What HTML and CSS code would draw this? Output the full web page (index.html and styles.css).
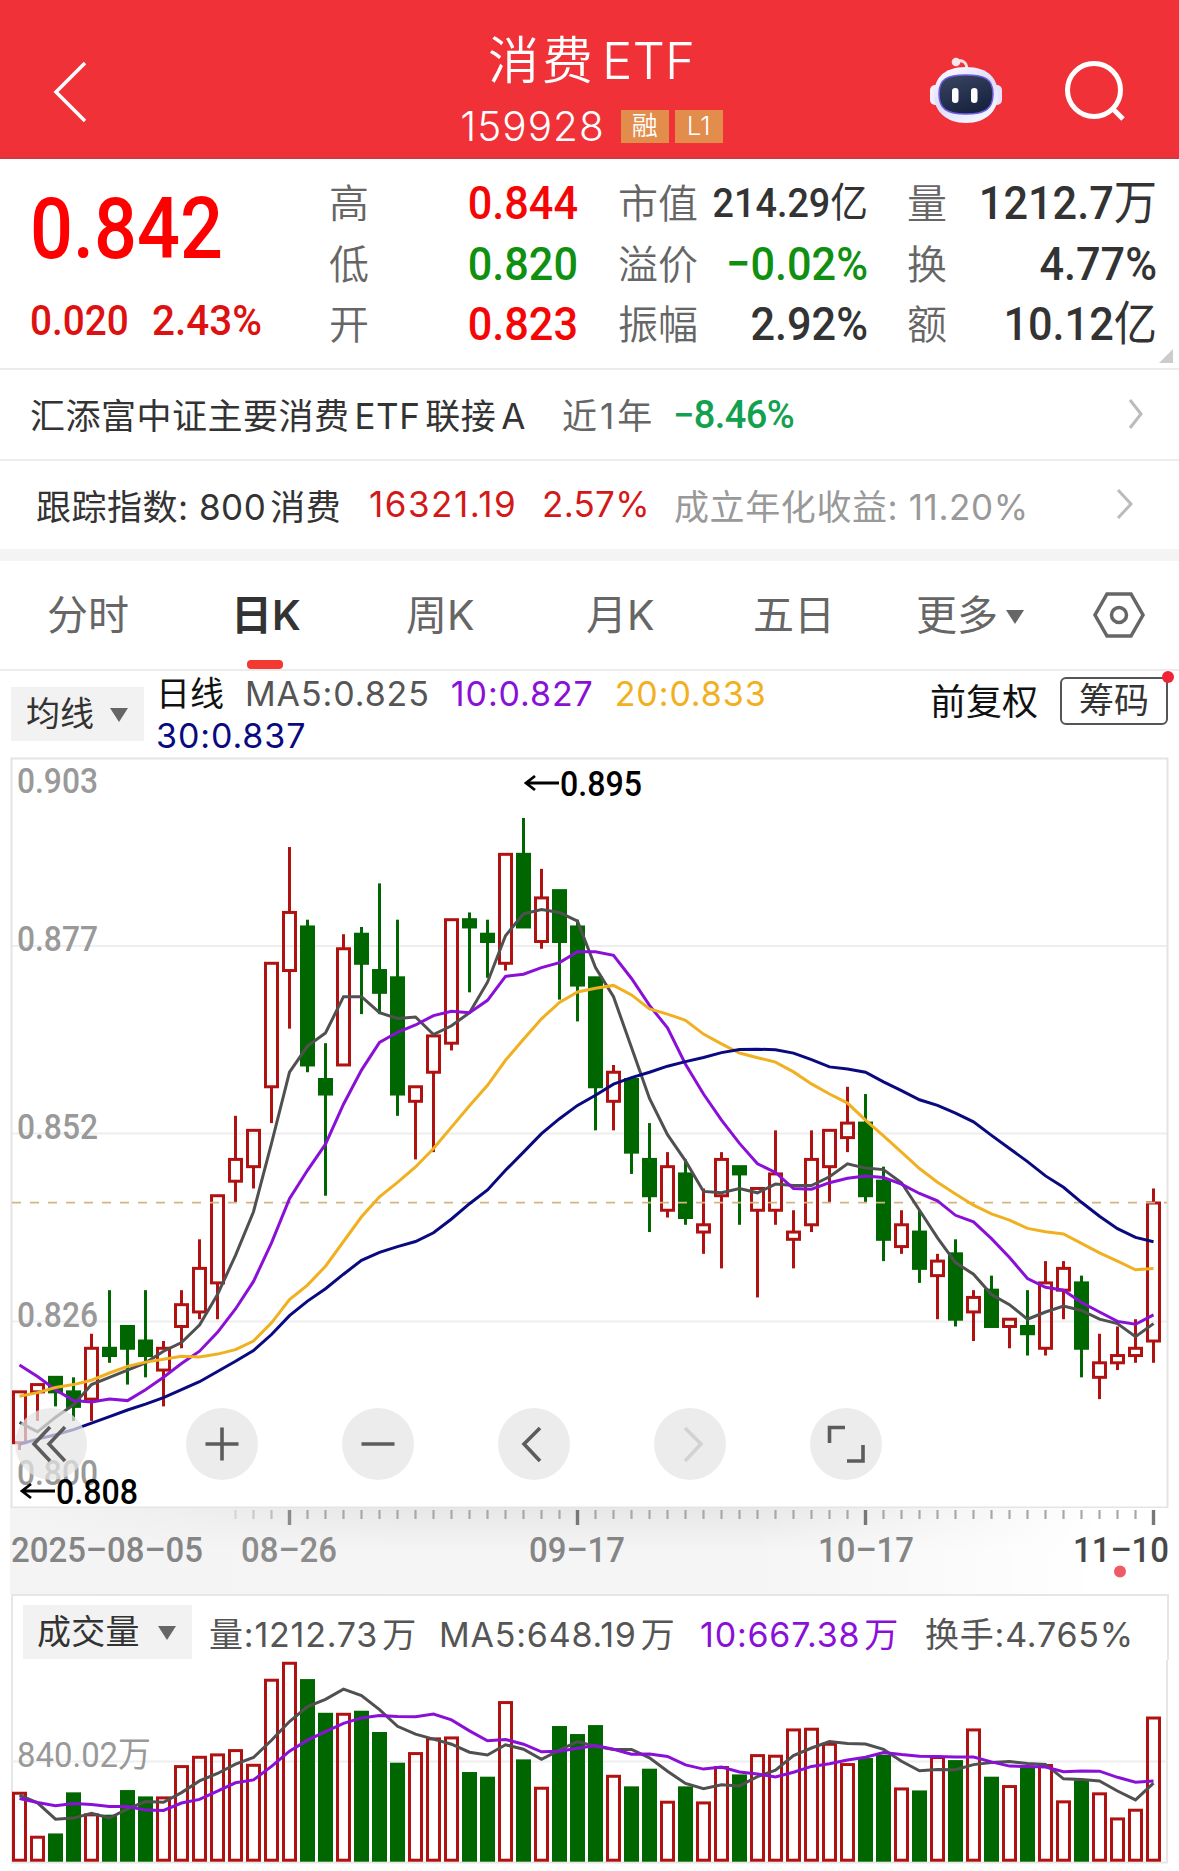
FILE: index.html
```html
<!DOCTYPE html>
<html lang="zh-CN">
<head>
    <meta charset="UTF-8">
    <title>消费ETF</title>
    <link rel="stylesheet" href="styles.css">
</head>
<body>
<header class="header">
    <svg class="back" width="40" height="66" viewBox="0 0 40 66"><path d="M35 4 6 33l29 29"/></svg>
    <div class="title">
        <h1>消费<span>ETF</span></h1>
        <p><span class="code">159928</span><i>融</i><i>L1</i></p>
    </div>
    <div class="tools">
        <svg width="76" height="72" viewBox="0 0 76 72">
            <defs>
                <linearGradient id="head" x1="0" y1="0" x2="0.6" y2="1">
                    <stop offset="0" stop-color="#ffffff"/>
                    <stop offset="0.55" stop-color="#dedcfb"/>
                    <stop offset="1" stop-color="#f1f6ff"/>
                </linearGradient>
                <linearGradient id="face" x1="0" y1="0" x2="0.5" y2="1">
                    <stop offset="0" stop-color="#3b4663"/>
                    <stop offset="1" stop-color="#18233f"/>
                </linearGradient>
            </defs>
            <path d="M28 6c6-3 11 0 11 8" fill="none" stroke="#f7dfe6" stroke-width="3"/>
            <circle cx="28" cy="6" r="4.3" fill="#f9e6ea"/>
            <rect x="2" y="29" width="12" height="20" rx="5" fill="#f4eefb"/>
            <rect x="62" y="29" width="12" height="20" rx="5" fill="#e6e2fb"/>
            <path d="M38 11c23 0 32 12 32 28S58 67 38 67 6 55 6 39s9-28 32-28z" fill="url(#head)"/>
            <path d="M38 19c19 0 27 4 27 19s-8 20-27 20-27-5-27-20 8-19 27-19z" fill="url(#face)" stroke="#6d5ce0" stroke-width="1.5"/>
            <rect x="24" y="32" width="6.5" height="15" rx="3.2" fill="#fff"/>
            <rect x="43" y="32" width="6.5" height="15" rx="3.2" fill="#fff"/>
        </svg>
        <svg class="search" width="64" height="64" viewBox="0 0 64 64"><circle cx="30" cy="30" r="26.5"/><path d="m49 49 10 10"/></svg>
    </div>
</header>

<section class="quote">
    <div class="now">
        <strong>0.842</strong>
        <p><span>0.020</span><span>2.43%</span></p>
    </div>
    <dl class="stats">
        <dt>高</dt><dd class="up">0.844</dd><dt>市值</dt><dd class="small">214.29<b>亿</b></dd><dt>量</dt><dd>1212.7<b>万</b></dd>
        <dt>低</dt><dd class="down">0.820</dd><dt>溢价</dt><dd class="down">−0.02%</dd><dt>换</dt><dd>4.77%</dd>
        <dt>开</dt><dd class="up">0.823</dd><dt>振幅</dt><dd>2.92%</dd><dt>额</dt><dd>10.12<b>亿</b></dd>
    </dl>
    <span class="corner"></span>
</section>

<a class="row fund">
    <span class="name">汇添富中证主要消费<em>ETF</em>联接<em>A</em></span>
    <span class="year">近1年</span>
    <span class="rate">−8.46%</span>
    <svg width="18" height="34" viewBox="0 0 18 34"><path d="m3 3 11 14L3 31"/></svg>
</a>
<a class="row index">
    <span class="name">跟踪指数: 800<em>消费</em></span>
    <span class="point">16321.19</span>
    <span class="pct">2.57%</span>
    <span class="profit">成立年化收益: 11.20%</span>
    <svg width="20" height="34" viewBox="0 0 20 34"><path d="m3 3 13 14L3 31"/></svg>
</a>

<nav class="tabs">
    <a>分时</a>
    <a class="current">日K</a>
    <a>周K</a>
    <a>月K</a>
    <a>五日</a>
    <a>更多<i class="arrow"></i></a>
    <svg width="54" height="48" viewBox="0 0 54 48"><path d="M15 3h24l12 21-12 21H15L3 24z"/><circle cx="27" cy="24" r="7.5"/></svg>
</nav>

<div class="legend">
    <span class="select">均线<i class="arrow"></i></span>
    <div class="ma">
        <p><span class="black">日线</span><span class="ma5">MA5:0.825</span><span class="ma10">10:0.827</span><span class="ma20">20:0.833</span></p>
        <p><span class="ma30">30:0.837</span></p>
    </div>
    <span class="fq">前复权</span>
    <span class="chip">筹码</span>
</div>

<div class="chart">
    <svg id="kline" width="1179" height="751" viewBox="0 757 1179 751"></svg>
    <div class="controls">
        <button><svg viewBox="0 0 72 72"><path d="M35 19 19 36l16 17M50 19 34 36l16 17"/></svg></button>
        <button><svg viewBox="0 0 72 72"><path d="M19.500 36h33M36 19.500v33"/></svg></button>
        <button><svg viewBox="0 0 72 72"><path d="M19.500 36h33"/></svg></button>
        <button><svg viewBox="0 0 72 72"><path d="M42 20 26 36l16 17"/></svg></button>
        <button class="off"><svg viewBox="0 0 72 72"><path d="m31 20 16 16-16 17"/></svg></button>
        <button><svg viewBox="0 0 72 72"><path d="M19.500 35V19.500H35M53 37v16H37"/></svg></button>
    </div>
</div>
<div class="axis">
    <svg id="axis" width="1179" height="86" viewBox="0 1508 1179 86"></svg>
</div>

<div class="volume">
    <div class="volbar">
        <span class="select">成交量<i class="arrow"></i></span>
        <span class="v1">量:1212.73<em>万</em></span>
        <span class="v2">MA5:648.19<em>万</em></span>
        <span class="v3 ma10">10:667.38<em>万</em></span>
        <span class="v4">换手:4.765%</span>
    </div>
    <svg id="vol" width="1179" height="204" viewBox="0 1660 1179 204"></svg>
</div>
<script src="chart.js"></script>
</body>
</html>
```

FILE: styles.css
```css
* {
    padding: 0;
    margin: 0;
    box-sizing: border-box;
}
body {
    width: 1179px;
    height: 1871px;
    overflow: hidden;
    background-color: #ffffff;
    font-family: Inter, "Noto Sans CJK SC", sans-serif;
    color: #333333;
}
svg {
    display: block;
    flex: none;
}
em, i {
    font-style: normal;
}
span, a {
    white-space: nowrap;
}
.header {
    height: 159px;
    display: grid;
    grid-template-columns: 240px 1fr 240px;
    padding: 0 50px;
    background-color: #f03138;
    border-bottom: 2px solid #cf3a40;
    color: #ffffff;
}
.back {
    margin-top: 59px;
}
.back path, .search {
    fill: none;
    stroke: #ffffff;
    stroke-width: 3.5;
}
.search {
    stroke-width: 5;
}
.title {
    text-align: center;
}
.title h1 {
    height: 66px;
    margin-top: 28px;
    padding-left: 4px;
    line-height: 66px;
    font-size: 51px;
    font-weight: 350;
    letter-spacing: 3px;
}
.title h1 span {
    margin-left: 6px;
    letter-spacing: 0;
}
.title p {
    display: flex;
    justify-content: center;
    align-items: center;
    gap: 6px;
    height: 64px;
    padding-left: 4px;
}
.title .code {
    margin-right: 10px;
    font-size: 40.5px;
    font-weight: 350;
    letter-spacing: 1px;
}
.title i {
    width: 48px;
    height: 33px;
    line-height: 32px;
    font-size: 26px;
    font-weight: 350;
    background-color: #e28d4b;
}
.tools {
    display: flex;
    justify-content: flex-end;
    gap: 60px;
    padding-top: 56px;
}
.tools .search {
    margin: 4px 1px 0 0;
}

.quote {
    position: relative;
    display: flex;
    height: 211px;
    border-bottom: 2px solid #ececec;
    font-family: Roboto, "Noto Sans CJK SC", sans-serif;
    font-weight: 500;
}
.now {
    width: 329px;
    padding-left: 30px;
    color: #dd1111;
}
.now strong {
    display: block;
    height: 104px;
    margin-top: 18px;
    line-height: 104px;
    font-size: 85px;
    font-weight: 500;
    color: #ff0000;
    transform: scaleX(0.89);
    transform-origin: left;
}
.now p {
    display: flex;
    height: 78px;
    line-height: 78px;
    font-size: 43px;
}
.now p span {
    width: 122px;
    transform: scaleX(0.9);
    transform-origin: left;
}
.now p span:last-child {
    transform: scaleX(0.94);
}
.stats {
    display: grid;
    grid-template-columns: 60px 189px 100px 190px 90px 199px;
    grid-template-rows: repeat(3, 60.5px);
    padding-top: 14px;
    line-height: 60px;
}
.stats dt {
    padding-top: 2px;
    white-space: nowrap;
    font-size: 40px;
    font-weight: 350;
    color: #666666;
}
.stats dt:nth-of-type(3n + 2) {
    margin-left: 40px;
}
.stats dt:nth-of-type(3n) {
    margin-left: 39px;
}
.stats dd {
    text-align: right;
    white-space: nowrap;
    font-size: 47px;
    transform: scaleX(0.92);
    transform-origin: right;
}
.stats .small {
    font-size: 41px;
}
.stats b {
    font-weight: 400;
}
.up {
    color: #f50505;
}
.down {
    color: #109010;
}
.corner {
    position: absolute;
    right: 6px;
    bottom: 5px;
    border-left: 14px solid transparent;
    border-bottom: 14px solid #cccccc;
}

.row {
    display: flex;
    align-items: center;
    height: 91px;
    padding-bottom: 2px;
    border-bottom: 2px solid #ececec;
    font-size: 35px;
}
.row svg {
    margin-left: auto;
    fill: none;
    stroke: #bbbbbb;
    stroke-width: 3;
}
.fund {
    padding-left: 30px;
    padding-right: 34px;
}
.fund .name {
    width: 532px;
    letter-spacing: 0.5px;
}
.fund .name em {
    margin: 0 5px;
}
.fund .year {
    width: 111px;
    letter-spacing: 3px;
    color: #666666;
}
.fund .rate {
    padding-top: 2px;
    font-family: Roboto, sans-serif;
    font-size: 38px;
    font-weight: 500;
    letter-spacing: -0.6px;
    color: #12a14f;
}
.index {
    height: 88px;
    padding-left: 36px;
    padding-right: 44px;
    border: none;
}
.index .name {
    width: 333px;
    letter-spacing: 0.5px;
}
.index .name em {
    margin-left: 4px;
}
.index .point {
    width: 173px;
    letter-spacing: 1.5px;
    color: #d31818;
}
.index .pct {
    width: 132px;
    letter-spacing: 0.3px;
    color: #d31818;
}
.index .profit {
    letter-spacing: 0.6px;
    color: #999999;
}

.tabs {
    display: grid;
    grid-template-columns: 184px 175px 180px 167px 163px 176px 54px;
    align-items: center;
    height: 122px;
    padding-left: 47px;
    border-top: 12px solid #f4f4f4;
    border-bottom: 2px solid #ececec;
    font-size: 41px;
    line-height: 108px;
    color: #666666;
}
.tabs .current {
    position: relative;
    font-weight: 600;
    color: #333333;
}
.tabs .current::after {
    content: "";
    position: absolute;
    left: 16px;
    bottom: 0;
    width: 36px;
    height: 9px;
    border-radius: 4px;
    background-color: #f23a30;
}
.tabs svg {
    fill: none;
    stroke: #666666;
    stroke-width: 3.5;
}
.arrow {
    display: inline-block;
    vertical-align: middle;
    border: 9.5px solid transparent;
    border-top: 14px solid #666666;
    border-bottom: none;
}
.tabs .arrow {
    margin: -4px 0 0 8px;
}

.legend {
    display: flex;
    height: 86px;
    padding-left: 11px;
    font-size: 34px;
}
.select {
    display: block;
    height: 54px;
    line-height: 54px;
    background-color: #f2f2f2;
}
.legend .select {
    width: 133px;
    margin: 16px 12px 0 0;
    padding-left: 15px;
}
.legend .arrow {
    margin: -4px 0 0 16px;
}
.ma {
    width: 774px;
    height: 86px;
    overflow: hidden;
}
.ma p {
    display: flex;
    gap: 21px;
    height: 42px;
    line-height: 46px;
    letter-spacing: 0.9px;
}
.ma .black {
    letter-spacing: 0;
}
.black, .fq {
    color: #111111;
}
.ma5 {
    color: #555555;
}
.ma10 {
    color: #8a10d8;
}
.ma20 {
    color: #f0b020;
}
.ma30 {
    color: #0a0a80;
}
.fq {
    width: 130px;
    line-height: 62px;
    font-size: 36px;
}
.chip {
    position: relative;
    width: 108px;
    height: 48px;
    margin-top: 6px;
    border: 2px solid #555555;
    border-radius: 6px;
    line-height: 43px;
    text-align: center;
    font-size: 35px;
}
.chip::after {
    content: "";
    position: absolute;
    right: -8px;
    top: -8px;
    width: 12px;
    height: 12px;
    border-radius: 50%;
    background-color: #f22334;
}

.chart {
    position: relative;
}
.chart svg text, .axis text, .volume text {
    font-family: Roboto, "Noto Sans CJK SC", sans-serif;
    font-size: 35px;
    font-weight: 500;
}
.controls {
    position: absolute;
    left: 15px;
    right: 0;
    bottom: 28px;
    display: flex;
    gap: 84px;
}
.controls button {
    width: 72px;
    height: 72px;
    border: none;
    border-radius: 50%;
    background-color: rgba(228, 228, 228, 0.72);
}
.controls button:first-child {
    margin-right: 15px;
}
.controls svg {
    fill: none;
    stroke: #5c5c5c;
    stroke-width: 3.6;
}
.controls .off svg {
    stroke: #d2d2d2;
}
.axis {
    background:
        linear-gradient(to right, #ffffff 0 10px, transparent 10px),
        linear-gradient(to right, #f4f4f4 10px, rgba(244, 244, 244, 0) 400px, rgba(255, 255, 255, 0) 750px, #ffffff 1100px),
        linear-gradient(#e7e7e7, #f5f5f5 50%);
}

.volume {
    display: flex;
    flex-direction: column;
    height: 277px;
}
.volbar {
    display: flex;
    align-items: center;
    height: 66px;
    margin: 0 10px 0 11px;
    padding: 8px 0 0 10px;
    border: 2px solid #e6e6e6;
    border-bottom: none;
    font-size: 34px;
    letter-spacing: 0.8px;
    color: #555555;
}
.volbar .select {
    width: 169px;
    margin-right: 17px;
    padding-left: 14px;
    letter-spacing: 0.3px;
    color: #333333;
}
.volbar .arrow {
    margin: -4px 0 0 18px;
}
.volbar em {
    margin-left: 4px;
}
.v1 {
    width: 230px;
}
.v2 {
    width: 261px;
}
.v3 {
    width: 225px;
}
```

FILE: chart.js
```js
// [open, high, low, close, volume]  price in 0.001
var data = [
    [809, 816, 808, 816, 583], [816, 817, 812, 817, 215], [818, 818, 814, 816, 234], [816, 818, 812, 814, 578],
    [815, 824, 812, 822, 402], [822, 830, 820, 821, 391], [825, 825, 817, 822, 597], [823, 830, 818, 821, 544],
    [819, 823, 814, 822, 544], [825, 830, 822, 828, 806], [827, 837, 826, 833, 884], [831, 843, 826, 843, 904],
    [845, 854, 842, 848, 940], [847, 852, 844, 852, 817], [858, 875, 853, 875, 1529], [874, 891, 866, 882, 1671],
    [880, 881, 860, 861, 1526], [859, 864, 843, 857, 1244], [861, 879, 861, 877, 1244], [879, 880, 868, 875, 1261],
    [874, 886, 868, 871, 1083], [873, 881, 854, 857, 826], [856, 858, 848, 858, 915], [860, 865, 849, 865, 1038],
    [864, 881, 863, 881, 1046], [881, 882, 871, 880, 748], [879, 881, 873, 878, 709], [875, 890, 874, 890, 1342],
    [890, 895, 880, 880, 854], [878, 888, 877, 884, 625], [885, 885, 870, 878, 1133], [880, 881, 867, 872, 1066],
    [873, 873, 852, 858, 1141], [856, 861, 852, 860, 725], [859, 859, 846, 849, 628], [848, 853, 838, 843, 776],
    [841, 849, 840, 847, 508], [846, 848, 839, 840, 628], [838, 844, 835, 839, 502], [843, 849, 833, 848, 798],
    [847, 847, 839, 846, 728], [841, 844, 829, 844, 898], [841, 852, 839, 846, 893], [837, 841, 833, 838, 1113],
    [839, 852, 838, 848, 1119], [847, 852, 842, 852, 993], [851, 858, 849, 853, 823], [853, 857, 842, 843, 865],
    [845, 847, 834, 837, 893], [836, 841, 835, 839, 619], [838, 841, 831, 833, 594], [832, 835, 826, 834, 882],
    [835, 837, 825, 826, 848], [827, 830, 823, 829, 1113], [830, 832, 825, 825, 709], [825, 826, 822, 826, 639],
    [825, 830, 821, 824, 787], [822, 834, 821, 831, 815], [830, 834, 826, 833, 511], [831, 832, 818, 822, 678],
    [818, 824, 815, 820, 578], [820, 825, 819, 821, 368], [821, 826, 820, 822, 441], [823, 844, 820, 842, 1212.73]
];
// averages for the days whose window starts before the first candle
var head = {
    5: [811.8, 810.5, 812.5, 814.2],
    10: [819.7, 818.1, 816.3, 814.8, 814.6, 815, 814.8, 816.3, 818],
    20: [815.4, 815.9, 816.6, 817, 817.6, 818.6, 819.5, 820.1, 820.5, 820.9, 820.8, 821.2, 821.8, 823, 825.5, 828.7, 830.7, 833.3, 836.7],
    30: [808.8, 809.5, 810.1, 810.8, 811.7, 812.6, 813.5, 814.3, 815.2, 816.3, 817.4, 818.8, 820.2, 821.7, 823.9, 826.5, 828.5, 830.2, 832.2, 834.1, 835.2, 836, 836.7, 837.9, 839.8, 841.9, 843.8, 846.5, 849]
};
var volHead = {
    5: [555, 491, 354, 363],
    10: [527, 494, 466, 485, 477, 460, 460, 430, 427]
};
var RED = '#b01212', GREEN = '#006600';

function x(i) {
    return 19.5 + 18 * i;
}
function y(p) {
    return 818 + (895 - p) * 7.264;
}
function vy(v) {
    return 1861.5 - v / 8.37;
}
function line(x1, y1, x2, y2, color, width, more) {
    return '<path d="M' + x1 + ' ' + y1 + 'L' + x2 + ' ' + y2 + '" stroke="' + color + '" stroke-width="' + width + '" ' + (more || '') + '/>';
}
function text(s, left, base, width, color, more) {
    return '<text x="' + left + '" y="' + base + '" textLength="' + width + '" lengthAdjust="spacingAndGlyphs" fill="' + color + '" ' + (more || '') + '>' + s + '</text>';
}
function average(col, n, first, toY, color) {
    var points = data.map(function (d, i) {
        var v = first[i];
        if (i >= n - 1) {
            v = 0;
            for (var k = i - n + 1; k <= i; k++) v += data[k][col];
            v /= n;
        }
        return x(i) + ',' + toY(v).toFixed(1);
    });
    return '<polyline points="' + points.join(' ') + '" fill="none" stroke="' + color + '" stroke-width="3"/>';
}
function box(i, top, bottom, up) {
    return '<rect x="' + (x(i) - 6) + '" y="' + top + '" width="12" height="' + (bottom - top) + '" fill="' +
        (up ? 'none' : GREEN) + '" stroke="' + (up ? RED : GREEN) + '" stroke-width="3"/>';
}

// candles
var html = '';
[946, 1133.5, 1321.5].forEach(function (v) {
    html += line(12, v, 1167, v, '#eeeeee', 2);
});
html += '<rect x="11.500" y="758.500" width="1156" height="749" fill="none" stroke="#e4e4e4" stroke-width="2"/>';
[['0.903', 793], ['0.877', 951], ['0.852', 1139], ['0.826', 1327], ['0.800', 1485]].forEach(function (v) {
    html += text(v[0], 17, v[1], 81, '#999999');
});
data.forEach(function (d, i) {
    var up = d[3] > d[0];
    var color = up ? RED : GREEN;
    var top = y(Math.max(d[0], d[3])), bottom = y(Math.min(d[0], d[3]));
    html += line(x(i), y(d[1]), x(i), top, color, 3) + line(x(i), bottom, x(i), y(d[2]), color, 3);
    html += box(i, top, bottom, up);
});
html += line(12, 1202.7, 1167, 1202.7, '#d3b483', 1.8, 'stroke-dasharray="9 9"');
html += average(3, 5, head[5], y, '#505050');
html += average(3, 10, head[10], y, '#8a10d8');
html += average(3, 20, head[20], y, '#f0b020');
html += average(3, 30, head[30], y, '#0a0a80');
[[525, 783, '0.895'], [21, 1491, '0.808']].forEach(function (m) {
    html += '<path d="M' + (m[0] + 34) + ' ' + m[1] + 'h-33m9-7-9 7 9 7" fill="none" stroke="#000" stroke-width="2.800"/>';
    html += text(m[2], m[0] + 35, m[1] + 13, 82, '#000000');
});
document.getElementById('kline').innerHTML = html;

// time axis
html = '';
for (var i = 12; i < 64; i++) {
    var big = i % 16 === 15;
    html += line(x(i), 1510, x(i), big ? 1525 : 1519, big ? '#777777' : '#a8a8a8', big ? 3.4 : 2.2, 'opacity="' + Math.min(1, (i - 10) / 6) + '"');
}
html += text('2025–08–05', 11, 1562, 192, '#858585');
html += text('08–26', 241, 1562, 96, '#8c8c8c');
html += text('09–17', 529, 1562, 96, '#858585');
html += text('10–17', 818, 1562, 96, '#858585');
html += text('11–10', 1073, 1562, 96, '#484848');
html += '<circle cx="1120" cy="1571.500" r="6" fill="#ec5b66"/>';
document.getElementById('axis').innerHTML = html;

// volume
html = '<path d="M12 1660v202.500h1155V1660" fill="none" stroke="#e6e6e6" stroke-width="2"/>';
html += line(12, 1761.5, 1167, 1761.5, '#eeeeee', 2);
html += text('840.02万', 17, 1767, 134, '#999999', 'style="font-weight:400"');
data.forEach(function (d, i) {
    html += box(i, vy(d[4]) + 1.4, 1860.2, d[3] > d[0]);
});
html += average(4, 5, volHead[5], vy, '#505050');
html += average(4, 10, volHead[10], vy, '#8a10d8');
document.getElementById('vol').innerHTML = html;
```
